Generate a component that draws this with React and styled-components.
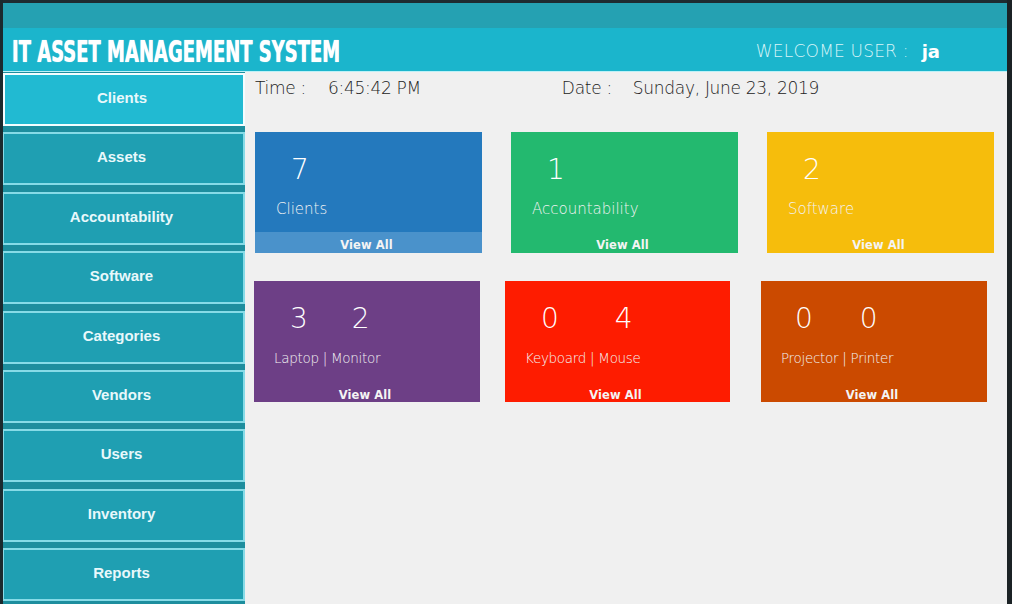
import styled, { createGlobalStyle } from "styled-components";

const GlobalStyle = createGlobalStyle`
  html, body {
    margin: 0;
    padding: 0;
    background: #f0f0f0;
    overflow: hidden;
  }
  *, *::before, *::after {
    box-sizing: border-box;
  }
`;

const menu = [
  "Clients",
  "Assets",
  "Accountability",
  "Software",
  "Categories",
  "Vendors",
  "Users",
  "Inventory",
  "Reports",
];

const topCards = [
  { color: "#2479bd", foot: "#4a92cb", nums: ["7"], label: "Clients", ml: 0, w: 227 },
  { color: "#23b96f", nums: ["1"], label: "Accountability", ml: 29, w: 227 },
  { color: "#f6bd0c", nums: ["2"], label: "Software", ml: 29, w: 227 },
];

const bottomCards = [
  { color: "#6d3f86", nums: ["3", "2"], gap: 44, label: "Laptop | Monitor", ml: 0, w: 226 },
  { color: "#fe1c00", nums: ["0", "4"], gap: 56, label: "Keyboard | Mouse", ml: 25, w: 225 },
  { color: "#cb4a00", nums: ["0", "0"], gap: 47, label: "Projector | Printer", pad: 34, ml: 31, w: 226 },
];

export default function App() {
  return (
    <>
      <GlobalStyle />
      <Window>
        <TitleStrip />
        <Header>
          <Title>IT ASSET MANAGEMENT SYSTEM</Title>
          <Welcome>
            WELCOME USER :<User>ja</User>
          </Welcome>
        </Header>
        <Body>
          <Sidebar>
            {menu.map((m, i) => (
              <MenuButton key={m} $active={i === 0}>
                {m}
              </MenuButton>
            ))}
          </Sidebar>
          <Main>
            <InfoRow>
              <Info>
                <InfoLabel>Time :</InfoLabel>
                <span>6:45:42 PM</span>
              </Info>
              <Info>
                <InfoLabel $narrow>Date :</InfoLabel>
                <span>Sunday, June 23, 2019</span>
              </Info>
            </InfoRow>
            <CardRow>
              {topCards.map((c) => (
                <Card key={c.label} c={c} big />
              ))}
            </CardRow>
            <CardRow $shift={-1}>
              {bottomCards.map((c) => (
                <Card key={c.label} c={c} />
              ))}
            </CardRow>
          </Main>
        </Body>
      </Window>
    </>
  );
}

function Card({ c, big }) {
  return (
    <Tile $color={c.color} $ml={c.ml} $w={c.w}>
      <Numbers $gap={c.gap || 0} $pad={c.pad || 36}>
        {c.nums.map((n, i) => (
          <Num key={i}>{n}</Num>
        ))}
      </Numbers>
      <Label $big={big}>{c.label}</Label>
      <Footer $color={c.foot} $big={big}>View All</Footer>
    </Tile>
  );
}

const Window = styled.div`
  width: 1012px;
  height: 604px;
  display: flex;
  flex-direction: column;
  border-left: 3px solid #1b2a2e;
  border-right: 5px solid #1b2225;
  background: #f0f0f0;
  overflow: hidden;
`;

const TitleStrip = styled.div`
  height: 28px;
  flex-shrink: 0;
  background: #25a1b2;
  border-top: 3px solid #1e2b30;
`;

const Header = styled.div`
  height: 44px;
  flex-shrink: 0;
  background: #1bb5cc;
  border-bottom: 1px solid #bdf1f7;
  display: flex;
  align-items: center;
  justify-content: space-between;
  padding: 0 67px 0 9px;
`;

const Title = styled.div`
  font-family: "DejaVu Sans Condensed", "Liberation Sans", sans-serif;
  font-weight: bold;
  font-size: 29px;
  color: #ffffff;
  white-space: nowrap;
  width: 330px;
  transform: scale(0.69, 1.02);
  transform-origin: left center;
  margin-top: 5px;
  text-shadow: 0 0 1px #ffffff;
`;

const Welcome = styled.div`
  font-family: "DejaVu Sans", sans-serif;
  font-weight: 200;
  font-size: 17px;
  color: #d8f4f8;
  letter-spacing: 0.2px;
  display: flex;
  align-items: center;
  margin-top: 3px;
`;

const User = styled.span`
  font-weight: bold;
  color: #ffffff;
  margin-left: 13px;
  font-size: 18px;
  letter-spacing: 0;
`;

const Body = styled.div`
  flex: 1;
  display: flex;
  min-height: 0;
`;

const Sidebar = styled.div`
  width: 242px;
  flex-shrink: 0;
  background: #1d8e9e;
  display: flex;
  flex-direction: column;
  gap: 6.4px;
  padding-top: 1px;
`;

const MenuButton = styled.div`
  height: 53px;
  flex-shrink: 0;
  display: flex;
  align-items: center;
  justify-content: center;
  background: ${(p) => (p.$active ? "#21bad2" : "#1f9fb2")};
  border: 2px solid ${(p) => (p.$active ? "#f3fdff" : "#86dbe7")};
  border-left-width: ${(p) => (p.$active ? "2px" : "1px")};
  font-family: "Liberation Sans", Arial, sans-serif;
  font-weight: bold;
  font-size: 15px;
  color: #e8f8fb;
  padding-right: 4px;
  padding-bottom: 4px;
`;

const Main = styled.div`
  flex: 1;
  padding: 4px 0 0 10px;
  display: flex;
  flex-direction: column;
`;

const InfoRow = styled.div`
  display: flex;
  height: 24px;
  align-items: center;
  gap: 141px;
  font-family: "DejaVu Sans", sans-serif;
  font-weight: 200;
  font-size: 17px;
  color: #222222;
  letter-spacing: -0.3px;
  margin-bottom: 32px;
`;

const Info = styled.div`
  display: flex;
  align-items: center;
`;

const InfoLabel = styled.span`
  width: ${(p) => (p.$narrow ? "71px" : "73px")};
`;

const CardRow = styled.div`
  display: flex;
  margin-bottom: 28px;
  margin-left: ${(p) => p.$shift || 0}px;
`;

const Tile = styled.div`
  width: ${(p) => p.$w}px;
  height: 121px;
  margin-left: ${(p) => p.$ml}px;
  background: ${(p) => p.$color};
  display: flex;
  flex-direction: column;
  color: #ffffff;
  font-family: "DejaVu Sans", sans-serif;
`;

const Numbers = styled.div`
  display: flex;
  gap: ${(p) => p.$gap}px;
  padding: 22px 0 0 ${(p) => p.$pad}px;
  height: 54px;
  align-items: center;
`;

const Num = styled.span`
  font-size: 28px;
  font-weight: 200;
  line-height: 1;
`;

const Label = styled.div`
  font-size: ${(p) => (p.$big ? "15px" : "13.5px")};
  font-weight: 200;
  color: #f2f2f2;
  padding-left: ${(p) => (p.$big ? "21px" : "20px")};
  margin-top: 13px;
  height: 20px;
  display: flex;
  align-items: center;
  letter-spacing: ${(p) => (p.$big ? "0" : "-0.3px")};
`;

const Footer = styled.div`
  margin-top: auto;
  height: 21px;
  background: ${(p) => p.$color || "transparent"};
  display: flex;
  align-items: center;
  justify-content: center;
  font-family: "DejaVu Sans", Verdana, sans-serif;
  font-weight: bold;
  font-size: 11.5px;
  letter-spacing: 0.1px;
  color: #f4f4f4;
  padding-top: ${(p) => (p.$big ? "4px" : "7px")};
  padding-right: 4px;
`;
